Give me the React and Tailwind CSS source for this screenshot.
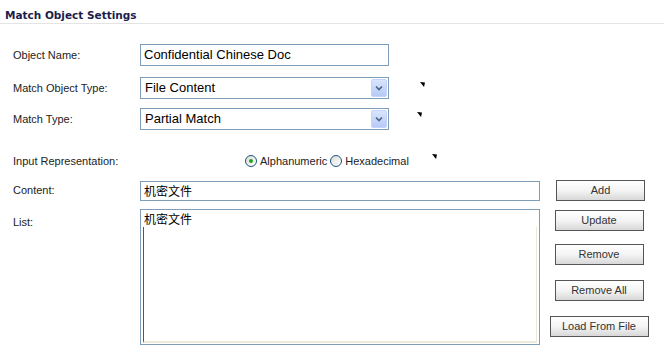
import React from "react";

const label = "text-[11px] text-[#222] font-['Liberation_Sans',Arial,sans-serif]";
const field = "font-['Liberation_Sans',Arial,sans-serif] text-[13px] text-black";
const cjk = "font-['Noto_Sans_CJK_SC','Liberation_Sans',sans-serif] text-[12px] text-black";

function Tick({ className }) {
  return (
    <svg className={`absolute ${className}`} width="5" height="5" viewBox="0 0 5 5">
      <polygon points="0,0 5,0.5 4,5" fill="#000" />
    </svg>
  );
}

function Select({ value }) {
  return (
    <div className="flex h-[22px] w-[249px] items-center justify-between border border-[#7f9db9] bg-white pl-[4px] pr-[1px]">
      <span className={field}>{value}</span>
      <div className="flex h-[18px] w-[16px] items-center justify-center rounded-[2px] border border-[#c3d3fd] bg-gradient-to-b from-[#d9e5fd] to-[#b6caf6]">
        <svg width="8" height="6" viewBox="0 0 8 6">
          <path d="M1 1.5 L4 4.5 L7 1.5" stroke="#4d6185" strokeWidth="1.6" fill="none" />
        </svg>
      </div>
    </div>
  );
}

function Btn({ children, className = "w-[89px]" }) {
  return (
    <button
      type="button"
      className={`block h-[21px] border border-[#555] bg-gradient-to-b from-white via-[#f4f4f4] to-[#d8d8d8] text-[11px] leading-[19px] text-[#333] font-['Liberation_Sans',Arial,sans-serif] ${className}`}
    >
      {children}
    </button>
  );
}

function Radio({ checked, children }) {
  return (
    <label className="flex items-center gap-[3px]">
      <span className="flex h-[12px] w-[12px] items-center justify-center rounded-full border border-[#1c5180] bg-gradient-to-br from-[#dcdcd6] to-white">
        {checked && <span className="h-[4px] w-[4px] rounded-full bg-[#21a121]" />}
      </span>
      <span className={`${label} text-[10.5px]`}>{children}</span>
    </label>
  );
}

export default function App() {
  return (
    <div className="relative h-[360px] w-[664px] overflow-hidden bg-white">
      {/* heading */}
      <div className="h-[24px] border-b border-[#e4e4e4] pl-[5px] pt-[8px]">
        <h1 className="text-[10.5px] font-bold leading-[14px] text-[#1b1d4c] font-['DejaVu_Sans',Verdana,sans-serif]">
          Match Object Settings
        </h1>
      </div>

      <div className="mt-[20px] flex flex-col">
        <div className="flex h-[22px] items-center">
          <div className={`w-[140px] pl-[13px] ${label}`}>Object Name:</div>
          <div className="flex h-[22px] w-[249px] items-center border border-[#7f9db9] pl-[3px]">
            <span className={field}>Confidential Chinese Doc</span>
          </div>
        </div>

        <div className="mt-[11px] flex h-[22px] items-center">
          <div className={`w-[140px] pl-[13px] ${label}`}>Match Object Type:</div>
          <Select value="File Content" />
        </div>

        <div className="mt-[9px] flex h-[22px] items-center">
          <div className={`w-[140px] pl-[13px] ${label}`}>Match Type:</div>
          <Select value="Partial Match" />
        </div>

        <div className="mt-[23px] flex h-[16px] items-center">
          <div className={`w-[245px] pl-[13px] ${label}`}>Input Representation:</div>
          <Radio checked>Alphanumeric</Radio>
          <div className="w-[3px]" />
          <Radio>Hexadecimal</Radio>
        </div>

        <div className="mt-[11px] flex h-[21px] items-center">
          <div className={`w-[140px] pl-[13px] ${label}`}>Content:</div>
          <div className="flex h-[20px] w-[400px] items-center border border-[#7f9db9] pl-[3px]">
            <span className={cjk}>机密文件</span>
          </div>
          <Btn className="ml-[16px] w-[89px]">Add</Btn>
        </div>

        <div className="mt-[8px] flex">
          <div className={`w-[140px] pl-[13px] pt-[5px] ${label}`}>List:</div>
          <div className="flex h-[136px] w-[400px] flex-col border border-[#7f9db9] pl-[2px] pr-[2px] pb-[1px]">
            <div className={`h-[17px] pl-[1px] pt-[2px] leading-[14px] ${cjk}`}>机密文件</div>
            <div className="flex-1 border-b-2 border-l border-r border-b-[#ece9d8] border-l-[#555] border-r-[#ece9d8]" />
          </div>
          <div className="ml-[4px] flex w-[110px] flex-col items-center pt-[1px]">
            <Btn className="w-[89px]">Update</Btn>
            <Btn className="mt-[13px] w-[89px]">Remove</Btn>
            <Btn className="mt-[15px] w-[89px]">Remove All</Btn>
            <Btn className="mt-[15px] w-[99px]">Load From File</Btn>
          </div>
        </div>
      </div>

      <Tick className="left-[420px] top-[82px]" />
      <Tick className="left-[417px] top-[112px]" />
      <Tick className="left-[432px] top-[154px]" />
    </div>
  );
}
